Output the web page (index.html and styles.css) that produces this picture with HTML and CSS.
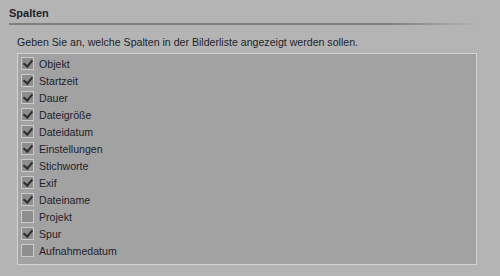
FILE: index.html
```html
<!DOCTYPE html>
<html lang="de">
<head>
    <meta charset="UTF-8">
    <title>Spalten</title>
    <link rel="stylesheet" href="styles.css">
</head>
<body>
    <div class="panel">
        <h2 class="panel-title">Spalten</h2>
        <div class="divider"></div>
        <p class="hint">Geben Sie an, welche Spalten in der Bilderliste angezeigt werden sollen.</p>
        <ul class="column-list">
            <li class="item checked"><span class="box"></span>Objekt</li>
            <li class="item checked"><span class="box"></span>Startzeit</li>
            <li class="item checked"><span class="box"></span>Dauer</li>
            <li class="item checked"><span class="box"></span>Dateigröße</li>
            <li class="item checked"><span class="box"></span>Dateidatum</li>
            <li class="item checked"><span class="box"></span>Einstellungen</li>
            <li class="item checked"><span class="box"></span>Stichworte</li>
            <li class="item checked"><span class="box"></span>Exif</li>
            <li class="item checked"><span class="box"></span>Dateiname</li>
            <li class="item"><span class="box"></span>Projekt</li>
            <li class="item checked"><span class="box"></span>Spur</li>
            <li class="item"><span class="box"></span>Aufnahmedatum</li>
        </ul>
    </div>
</body>
</html>
```
FILE: styles.css
```css
body {
    margin: 0;
    background: #b4b4b4;
    font-family: "Liberation Sans", Arial, sans-serif;
    font-size: 10.6px;
    color: #1e1e2a;
}

.panel {
    padding: 5px 20px 0 9px;
}

.panel-title {
    margin: 0;
    font-size: 11px;
    font-weight: bold;
    line-height: 16px;
}

.divider {
    height: 2px;
    margin-top: 2px;
    background: linear-gradient(90deg, #7e7e7e 0%, #7e7e7e 80%, #b4b4b4 100%);
}

.hint {
    margin: 10px 0 4px 8px;
    line-height: 14px;
}

.column-list {
    list-style: none;
    margin: 0 3px 0 8px;
    padding: 1px 0 5px 3px;
    background: #a2a2a2;
    border: 1px solid #d4d4d4;
}

.item {
    display: flex;
    align-items: center;
    height: 17px;
    gap: 5px;
}

.box {
    width: 11px;
    height: 11px;
    border: 1px solid #cbcbcb;
    background: #8e8e8e;
    position: relative;
}

.checked .box::after {
    content: "";
    position: absolute;
    left: 3px;
    top: 0;
    width: 4px;
    height: 7px;
    border: solid #2e2e2e;
    border-width: 0 2px 2px 0;
    transform: rotate(40deg);
}
```
